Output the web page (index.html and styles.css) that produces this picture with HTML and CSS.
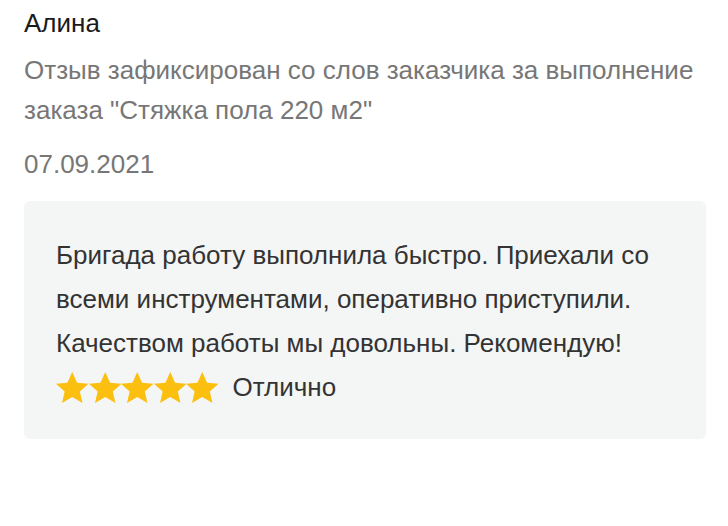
FILE: index.html
```html
<!DOCTYPE html>
<html lang="ru">
<head>
<meta charset="utf-8">
<link rel="stylesheet" href="styles.css">
</head>
<body>
<div class="review">
  <div class="name">Алина</div>
  <div class="source">Отзыв зафиксирован со слов заказчика за выполнение заказа "Стяжка пола 220 м2"</div>
  <div class="date">07.09.2021</div>
  <div class="card">
    <p class="text">Бригада работу выполнила быстро. Приехали со всеми инструментами, оперативно приступили. Качеством работы мы довольны. Рекомендую!</p>
    <div class="rating">
      <div class="stars">
        <svg class="star" viewBox="1.5 1.5 21 20"><path d="M12 1.5l3.1 6.9 7.4.7-5.6 5 1.7 7.4L12 17.6l-6.6 3.9 1.7-7.4-5.6-5 7.4-.7z"/></svg>
        <svg class="star" viewBox="1.5 1.5 21 20"><path d="M12 1.5l3.1 6.9 7.4.7-5.6 5 1.7 7.4L12 17.6l-6.6 3.9 1.7-7.4-5.6-5 7.4-.7z"/></svg>
        <svg class="star" viewBox="1.5 1.5 21 20"><path d="M12 1.5l3.1 6.9 7.4.7-5.6 5 1.7 7.4L12 17.6l-6.6 3.9 1.7-7.4-5.6-5 7.4-.7z"/></svg>
        <svg class="star" viewBox="1.5 1.5 21 20"><path d="M12 1.5l3.1 6.9 7.4.7-5.6 5 1.7 7.4L12 17.6l-6.6 3.9 1.7-7.4-5.6-5 7.4-.7z"/></svg>
        <svg class="star" viewBox="1.5 1.5 21 20"><path d="M12 1.5l3.1 6.9 7.4.7-5.6 5 1.7 7.4L12 17.6l-6.6 3.9 1.7-7.4-5.6-5 7.4-.7z"/></svg>
      </div>
      <span class="label">Отлично</span>
    </div>
  </div>
</div>
</body>
</html>
```
FILE: styles.css
```css
html, body {
  margin: 0;
  padding: 0;
  background: #fff;
}
body {
  font-family: "Liberation Sans", Arial, sans-serif;
}
.review {
  padding: 3px 22px 0 24px;
}
.name {
  font-size: 26px;
  line-height: 40px;
  color: #1a1a1a;
}
.source {
  font-size: 26px;
  line-height: 40px;
  color: #777;
  margin-top: 7px;
}
.date {
  font-size: 26px;
  line-height: 40px;
  color: #777;
  margin-top: 14px;
}
.card {
  margin-top: 17px;
  background: #f4f5f5;
  border-radius: 6px;
  padding: 32px 32px 30px 32px;
}
.text {
  margin: 0;
  font-size: 26px;
  line-height: 44px;
  color: #333;
}
.rating {
  display: flex;
  align-items: center;
  gap: 14px;
  height: 44px;
}
.stars {
  display: flex;
  gap: 0;
}
.star {
  width: 32.5px;
  height: 31px;
  fill: #fbbf0f;
}
.label {
  font-size: 26px;
  color: #333;
}
```
